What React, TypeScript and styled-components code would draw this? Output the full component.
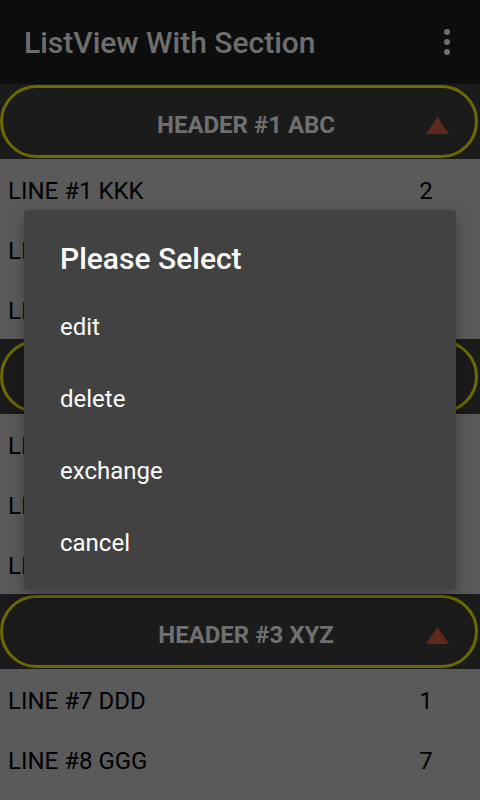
import React from "react";
import styled, { createGlobalStyle } from "styled-components";

const Global = createGlobalStyle`
  html, body { margin: 0; padding: 0; }
  body {
    width: 480px;
    height: 800px;
    overflow: hidden;
    background: #b4b4b6;
    font-family: Roboto, "Noto Sans", "Liberation Sans", sans-serif;
  }
`;

const Screen = styled.div`
  position: relative;
  width: 480px;
  height: 800px;
  overflow: hidden;
  display: flex;
  flex-direction: column;
`;

const AppBar = styled.div`
  flex: 0 0 84px;
  background: #1a1a1a;
  display: flex;
  align-items: center;
  justify-content: space-between;
  padding: 0 30px 0 24px;
`;

const AppTitle = styled.div`
  color: #dcdcdc;
  font-size: 30px;
  font-weight: 500;
`;

const Kebab = styled.div`
  display: flex;
  flex-direction: column;
  gap: 4px;
`;

const Dot = styled.span`
  width: 6px;
  height: 6px;
  border-radius: 50%;
  background: #dcdcdc;
`;

const List = styled.div`
  display: flex;
  flex-direction: column;
  background: #b4b4b6;
`;

const HeaderBand = styled.div`
  flex: 0 0 75px;
  height: 75px;
  background: #363636;
  padding: 1px 2px 1px 0;
  box-sizing: border-box;
  display: flex;
`;

const Pill = styled.div`
  flex: 1;
  border: 3px solid #d6d600;
  border-radius: 37px;
  display: flex;
  align-items: center;
  position: relative;
  padding-left: 14px;
`;

const HeaderText = styled.div`
  flex: 1;
  text-align: center;
  color: #dedede;
  font-size: 24px;
  font-weight: 700;
  padding-top: 6px;
`;

const Arrow = styled.svg`
  position: absolute;
  right: 26px;
  top: 50%;
  margin-top: -5px;
  width: 23px;
  height: 17px;
`;

const Row = styled.div`
  flex: 0 0 60px;
  height: 60px;
  box-sizing: border-box;
  display: flex;
  align-items: center;
  padding: 3px 0 0 8px;
  color: #000;
  font-size: 24px;
`;

const RowLabel = styled.div`
  flex: 1;
`;

const RowCount = styled.div`
  width: 30px;
  text-align: center;
  margin-right: 39px;
`;

const Scrim = styled.div`
  position: absolute;
  inset: 0;
  background: rgba(0, 0, 0, 0.5);
  display: flex;
  justify-content: center;
  padding-top: 210px;
  box-sizing: border-box;
`;

const Dialog = styled.div`
  width: 432px;
  height: 380px;
  background: #424242;
  border-radius: 4px;
  box-shadow: 0 6px 16px rgba(0, 0, 0, 0.3);
  display: flex;
  flex-direction: column;
  padding: 0 0 11px 36px;
  box-sizing: border-box;
`;

const DialogTitle = styled.div`
  height: 81px;
  display: flex;
  align-items: flex-end;
  padding-bottom: 15px;
  box-sizing: border-box;
  color: #fff;
  font-size: 30px;
  font-weight: 500;
`;

const Option = styled.div`
  height: 72px;
  display: flex;
  align-items: center;
  color: #fff;
  font-size: 24px;
`;

type Item = { label: string; count: number };
type Section = { title: string; items: Item[] };

const sections: Section[] = [
  {
    title: "HEADER #1 ABC",
    items: [
      { label: "LINE #1 KKK", count: 2 },
      { label: "LINE #2 AAA", count: 5 },
      { label: "LINE #3 BBB", count: 3 },
    ],
  },
  {
    title: "HEADER #2 DEF",
    items: [
      { label: "LINE #4 CCC", count: 4 },
      { label: "LINE #5 EEE", count: 6 },
      { label: "LINE #6 FFF", count: 8 },
    ],
  },
  {
    title: "HEADER #3 XYZ",
    items: [
      { label: "LINE #7 DDD", count: 1 },
      { label: "LINE #8 GGG", count: 7 },
      { label: "LINE #9 HHH", count: 9 },
    ],
  },
];

const options = ["edit", "delete", "exchange", "cancel"];

export default function App() {
  return (
    <>
      <Global />
      <Screen>
        <AppBar>
          <AppTitle>ListView With Section</AppTitle>
          <Kebab>
            <Dot />
            <Dot />
            <Dot />
          </Kebab>
        </AppBar>
        <List>
          {sections.map((s) => (
            <React.Fragment key={s.title}>
              <HeaderBand>
                <Pill>
                  <HeaderText>{s.title}</HeaderText>
                  <Arrow viewBox="0 0 23 17">
                    <polygon points="11.5,0 23,17 0,17" fill="#b85434" />
                  </Arrow>
                </Pill>
              </HeaderBand>
              {s.items.map((it) => (
                <Row key={it.label}>
                  <RowLabel>{it.label}</RowLabel>
                  <RowCount>{it.count}</RowCount>
                </Row>
              ))}
            </React.Fragment>
          ))}
        </List>
        <Scrim>
          <Dialog>
            <DialogTitle>Please Select</DialogTitle>
            {options.map((o) => (
              <Option key={o}>{o}</Option>
            ))}
          </Dialog>
        </Scrim>
      </Screen>
    </>
  );
}
